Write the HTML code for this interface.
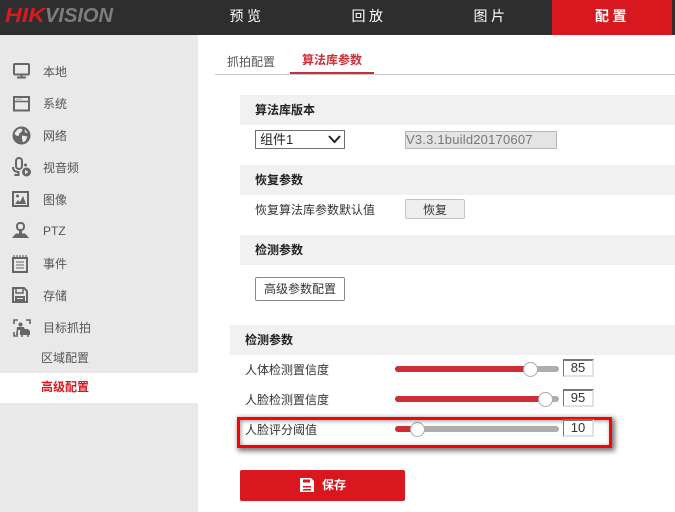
<!DOCTYPE html>
<html><head><meta charset="utf-8">
<style>
html,body{margin:0;padding:0}
body{width:675px;height:512px;overflow:hidden;background:#fff;position:relative;font-family:"Liberation Sans","Noto Sans CJK SC",sans-serif;font-size:12px;color:#333}
div,span,svg{position:absolute;white-space:nowrap}
.nav{top:0;height:35px;line-height:33px;color:#fff;font-size:14px;letter-spacing:3.500px;text-align:center}
.mi{left:43px;font-size:12px;color:#555;line-height:16px}
.bar{background:#f1f1f1;height:30px}
.h{font-weight:bold;color:#222;font-size:12px;line-height:16px}
.l{color:#333;font-size:12px;line-height:16px}
.tr{height:6px;background:#aeaeae;border-radius:3px;left:395px;width:164px}
.fill{height:6px;background:#cb2e36;border-radius:3px 0 0 3px;left:395px}
.th{width:13px;height:13px;border-radius:50%;background:#fff;border:1px solid #aaa}
.v{left:563px;width:28px;height:14px;border-top:2px solid #777;border-left:1px solid #777;border-right:2px solid #e2e2e2;border-bottom:2px solid #e2e2e2;text-align:center;line-height:13px;color:#333;font-size:13px;background:#fff;z-index:2}
svg.i{fill:none;stroke:#666;stroke-width:2}
</style></head><body>
<div style="left:0;top:0;width:675px;height:35px;background:#2e2e2e"></div>
<svg style="left:0;top:0" width="120" height="35" viewBox="0 0 120 35"><text x="5" y="22" font-family="Liberation Sans" font-size="20" font-style="italic" font-weight="bold" fill="#d91920" textLength="40" lengthAdjust="spacingAndGlyphs">HIK</text><text x="45" y="22" font-family="Liberation Sans" font-size="20" font-style="italic" font-weight="bold" fill="#7d7d7d" textLength="68" lengthAdjust="spacingAndGlyphs">VISION</text></svg>
<div class="nav" style="left:187px;width:120px">预览</div>
<div class="nav" style="left:309px;width:120px">回放</div>
<div class="nav" style="left:431px;width:120px">图片</div>
<div class="nav" style="left:552px;width:120px;background:#d8171f;font-weight:bold;text-indent:1px">配置</div>

<div style="left:0;top:35px;width:198px;height:477px;background:#e9e9e9"></div>
<div style="left:0;top:373px;width:198px;height:30px;background:#fff"></div>

<svg class="i" style="left:13px;top:63px" width="18" height="16" viewBox="0 0 18 16"><rect x="1" y="1" width="15" height="10.500" rx="1"/><path d="M8.500 12v2.500M4 14.500h9"/></svg>
<svg class="i" style="left:13px;top:96px" width="18" height="16" viewBox="0 0 18 16"><rect x="1" y="1" width="15" height="13.500"/><path d="M1 5.500h15" stroke-width="1.500"/><path d="M3.500 3.200h1M5.500 3.200h1M7.500 3.200h1" stroke-width="1"/></svg>
<svg style="left:12px;top:126px" width="19" height="19" viewBox="0 0 19 19"><circle cx="9.500" cy="9.500" r="9" fill="#666"/><path d="M2.500 8c1-3 3-5 6-5.500l2 1-1 2.500-2 1-.5 2.500-2 .5zM10 9.500l5.500 1-2 4.500-2.500 1.500-1-3.500zM12.500 3l3.500 4-3-.5z" fill="#e9e9e9"/></svg>
<svg style="left:12px;top:157px" width="20" height="20" viewBox="0 0 20 20"><rect x="4" y="1" width="6" height="11" rx="3" fill="none" stroke="#666" stroke-width="2"/><path d="M1 10c0 4 3 5 5.500 5v3H2.500" fill="none" stroke="#666" stroke-width="2"/><circle cx="13.500" cy="8" r="1.500" fill="#666"/><circle cx="14.500" cy="15" r="4.500" fill="#666"/><path d="M13 12.800l3.500 2.200-3.500 2.200z" fill="#e9e9e9"/></svg>
<svg style="left:12px;top:191px" width="17" height="16" viewBox="0 0 17 16"><rect x="1" y="1" width="15" height="14" fill="none" stroke="#666" stroke-width="2"/><path d="M3 13l3-4 2 2 3-6 3 8z" fill="#666"/><circle cx="5.500" cy="5" r="1.500" fill="#666"/></svg>
<svg style="left:12px;top:222px" width="17" height="17" viewBox="0 0 17 17"><rect x="5" y="1" width="7" height="7" rx="3" fill="none" stroke="#666" stroke-width="2"/><path d="M7 9h3v2.500h3l2 2 2 2.500H0l2-2.500 2-2h3z" fill="#666"/></svg>
<svg style="left:12px;top:255px" width="16" height="18" viewBox="0 0 16 18"><rect x="1" y="3" width="14" height="14" fill="none" stroke="#666" stroke-width="2"/><path d="M2 0v3M5 0v3M8 0v3M11 0v3M14 0v3" stroke="#666" stroke-width="1.200"/><path d="M4 7h8M4 10h8M4 13h8" stroke="#666" stroke-width="1"/></svg>
<svg style="left:12px;top:287px" width="16" height="16" viewBox="0 0 16 16"><path d="M1 1h11l3 3v11H1z" fill="none" stroke="#666" stroke-width="2"/><path d="M4 1h7v5H4z" fill="none" stroke="#666" stroke-width="1.500"/><rect x="3" y="9" width="10" height="5" fill="#666"/><rect x="5" y="11" width="6" height="1" fill="#e9e9e9"/></svg>
<svg style="left:13px;top:319px" width="18" height="18" viewBox="0 0 18 18"><path d="M5 1H1v4M13 1h4v4M1 13v4h4" fill="none" stroke="#666" stroke-width="1.600"/><circle cx="7.500" cy="5.500" r="2" fill="#666"/><path d="M4 8h7l1 3H5v5H3z" fill="#666"/><path d="M7 12l1-2h7l2 2v4H7z" fill="#666"/><circle cx="9" cy="17" r="1" fill="#666"/><circle cx="15" cy="17" r="1" fill="#666"/></svg>

<div class="mi" style="top:64px">本地</div>
<div class="mi" style="top:96px">系统</div>
<div class="mi" style="top:128px">网络</div>
<div class="mi" style="top:160px">视音频</div>
<div class="mi" style="top:192px">图像</div>
<div class="mi" style="top:223px">PTZ</div>
<div class="mi" style="top:256px">事件</div>
<div class="mi" style="top:288px">存储</div>
<div class="mi" style="top:320px">目标抓拍</div>
<div class="mi" style="top:350px;left:41px">区域配置</div>
<div class="mi" style="top:379px;left:41px;color:#d8171f;font-weight:bold">高级配置</div>

<div class="l" style="left:227px;top:54px;color:#555">抓拍配置</div>
<div style="left:302px;top:52px;color:#cb2e36;font-weight:bold;line-height:16px">算法库参数</div>
<div style="left:215px;top:74px;width:460px;height:1px;background:#c8c8c8"></div>
<div style="left:290px;top:72px;width:84px;height:2px;background:#cb2e36"></div>

<div class="bar" style="left:240px;top:95px;width:435px"></div>
<div class="h" style="left:255px;top:102px">算法库版本</div>
<div style="left:255px;top:130px;width:88px;height:17px;border:1px solid #707070;background:#fff"></div>
<div class="l" style="left:260px;top:132px;font-size:13px;color:#222">组件1</div>
<svg style="left:328px;top:135px" width="13" height="9" viewBox="0 0 13 9"><path d="M1 1l5.500 6L12 1" fill="none" stroke="#222" stroke-width="2"/></svg>
<div style="left:405px;top:131px;width:150px;height:16px;border:1px solid #b5b5b5;background:#e4e4e4;color:#777;font-size:13px;line-height:16px;letter-spacing:.2px">V3.3.1build20170607</div>

<div class="bar" style="left:240px;top:165px;width:435px"></div>
<div class="h" style="left:255px;top:172px">恢复参数</div>
<div class="l" style="left:255px;top:202px">恢复算法库参数默认值</div>
<div style="left:405px;top:199px;width:58px;height:18px;border:1px solid #c4c4c4;border-radius:2px;background:#efefef;text-align:center;line-height:20px;color:#333">恢复</div>

<div class="bar" style="left:240px;top:235px;width:435px"></div>
<div class="h" style="left:255px;top:242px">检测参数</div>
<div style="left:255px;top:277px;width:88px;height:22px;border:1px solid #888;border-radius:2px;background:#fff;text-align:center;line-height:23px;color:#333">高级参数配置</div>

<div class="bar" style="left:230px;top:325px;width:445px"></div>
<div class="h" style="left:245px;top:332px">检测参数</div>

<div class="l" style="left:245px;top:362px">人体检测置信度</div>
<div class="tr" style="top:366px"></div><div class="fill" style="top:366px;width:135px"></div>
<div class="th" style="left:523px;top:362px"></div>
<div class="v" style="top:359px">85</div>

<div class="l" style="left:245px;top:392px">人脸检测置信度</div>
<div class="tr" style="top:396px"></div><div class="fill" style="top:396px;width:150px"></div>
<div class="th" style="left:538px;top:392px"></div>
<div class="v" style="top:389px">95</div>

<div class="l" style="left:245px;top:422px">人脸评分阈值</div>
<div class="tr" style="top:426px"></div><div class="fill" style="top:426px;width:16px"></div>
<div class="th" style="left:410px;top:422px"></div>
<div class="v" style="top:419px">10</div>

<div style="left:237px;top:417px;width:369px;height:25px;border:3px solid #f00;box-shadow:2px 2px 5px 1px rgba(0,0,0,.55),inset 1px 1px 4px rgba(0,0,0,.4)"></div>

<div style="left:240px;top:470px;width:165px;height:31px;background:#d8171f;border-radius:2px"></div>
<svg style="left:300px;top:478px" width="14" height="14" viewBox="0 0 14 14"><path d="M0 0h11l3 3v11H0z" fill="#fff"/><rect x="3" y="1.500" width="7" height="3" fill="#d8171f"/><rect x="3" y="8" width="8" height="1.500" fill="#d8171f"/><rect x="3" y="11" width="8" height="1.500" fill="#d8171f"/></svg>
<div style="left:322px;top:477px;color:#fff;line-height:16px;font-weight:bold">保存</div>
</body></html>
